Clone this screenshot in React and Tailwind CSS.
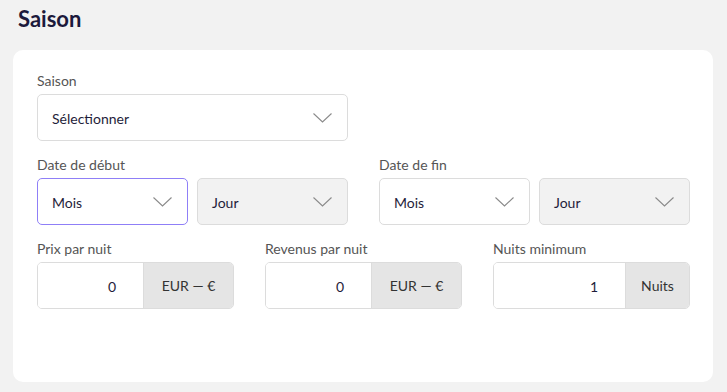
import React from "react";

const Chevron = () => (
  <svg width="19" height="10" viewBox="0 0 19 10" fill="none" className="shrink-0">
    <polyline points="0.5,0.5 9.5,9 18.5,0.5" stroke="#8a8a8a" strokeWidth="1.1" fill="none" />
  </svg>
);

function Select({ text, variant = "default", className = "" }) {
  const v =
    variant === "focus"
      ? "border-[#8f7ff7] bg-white"
      : variant === "gray"
      ? "border-[#dcdcdc] bg-[#f2f2f2]"
      : "border-[#dcdcdc] bg-white";
  return (
    <div className={`h-[47px] rounded-[5px] border ${v} flex items-center justify-between pl-[14px] pr-[15px] ${className}`}>
      <span className="text-[14px] text-[#1f1d3a] pt-[2px]">{text}</span>
      <Chevron />
    </div>
  );
}

function Label({ children, className = "" }) {
  return <div className={`h-[20px] leading-[20px] text-[14px] text-[#555555] mb-[3px] ${className}`}>{children}</div>;
}

function AddonInput({ value, addon, addonW }) {
  return (
    <div className="h-[47px] rounded-[5px] border border-[#dcdcdc] flex overflow-hidden">
      <div className="flex-1 bg-white flex items-center justify-end pr-[27px] text-[14px] text-[#1f1d3a] pt-[2px]">{value}</div>
      <div className={`${addonW} bg-[#e5e5e5] border-l border-[#dcdcdc] flex items-center justify-center text-[14px] text-[#333333]`}>{addon}</div>
    </div>
  );
}

export default function App() {
  return (
    <div className="w-[727px] h-[392px] bg-[#f2f2f2] flex flex-col" style={{ fontFamily: "Lato, 'Open Sans', sans-serif" }}>
      <div className="h-[50px] pl-[18px] pt-[5px]">
        <h1 className="text-[22px] font-bold text-[#1c1a3c] leading-[28px]">Saison</h1>
      </div>
      <div className="ml-[13px] w-[700px] h-[332px] bg-white rounded-[10px] pl-[24px] pr-[23px] pt-[21px]">
        <Label>Saison</Label>
        <Select text="Sélectionner" className="w-[311px]" />
        <div className="grid grid-cols-2 gap-x-[31px] mt-[14px] w-[653px]">
          <div>
            <Label>Date de début</Label>
            <div className="grid grid-cols-2 gap-x-[9px]">
              <Select text="Mois" variant="focus" />
              <Select text="Jour" variant="gray" />
            </div>
          </div>
          <div>
            <Label>Date de fin</Label>
            <div className="grid grid-cols-2 gap-x-[9px]">
              <Select text="Mois" />
              <Select text="Jour" variant="gray" />
            </div>
          </div>
        </div>
        <div className="grid grid-cols-3 gap-x-[31px] mt-[14px] w-[653px]">
          <div>
            <Label>Prix par nuit</Label>
            <AddonInput value="0" addon="EUR — €" addonW="w-[90px]" />
          </div>
          <div>
            <Label>Revenus par nuit</Label>
            <AddonInput value="0" addon="EUR — €" addonW="w-[90px]" />
          </div>
          <div>
            <Label>Nuits minimum</Label>
            <AddonInput value="1" addon="Nuits" addonW="w-[64px]" />
          </div>
        </div>
      </div>
    </div>
  );
}
